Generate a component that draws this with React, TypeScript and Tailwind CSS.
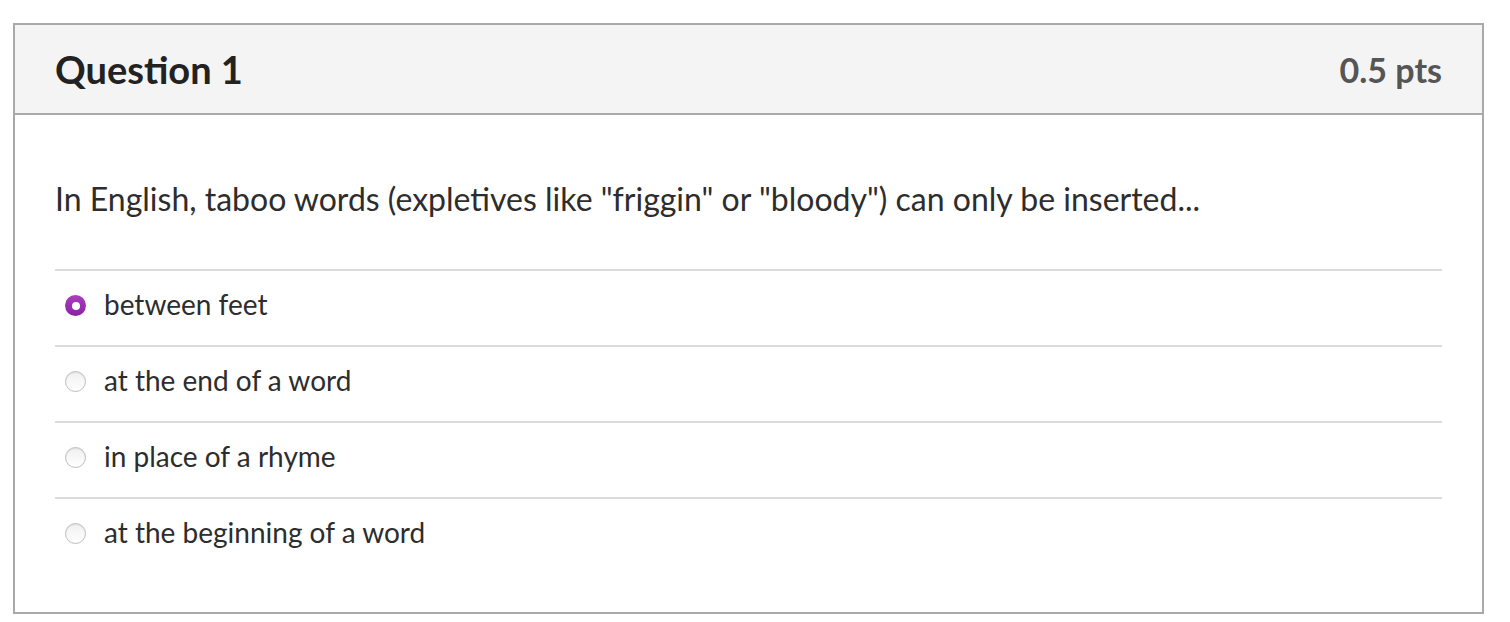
const options = [
  { id: "a", label: "between feet", checked: true },
  { id: "b", label: "at the end of a word", checked: false },
  { id: "c", label: "in place of a rhyme", checked: false },
  { id: "d", label: "at the beginning of a word", checked: false },
];

function Radio({ checked }: { checked: boolean }) {
  if (checked) {
    return (
      <span className="flex h-[21px] w-[21px] shrink-0 items-center justify-center rounded-full bg-gradient-to-b from-[#a93fbd] to-[#8c20a6]">
        <span className="h-[8px] w-[8px] rounded-full bg-white" />
      </span>
    );
  }
  return (
    <span className="h-[21px] w-[21px] shrink-0 rounded-full border border-[#bdbdbd] bg-gradient-to-b from-[#f0f0f0] to-white shadow-[inset_0_1px_1px_rgba(0,0,0,0.08)]" />
  );
}

export default function App() {
  return (
    <div className="min-h-[622px] bg-white pl-[13px] pt-[23px] font-['Lato','Liberation_Sans',sans-serif]">
      <div className="flex h-[591px] w-[1471px] flex-col border-2 border-[#a9a9a9]">
        <div className="flex h-[90px] items-center justify-between border-b-2 border-[#a9a9a9] bg-[#f4f4f4] px-[40px]">
          <h2 className="mt-[-1px] text-[38px] font-bold leading-[46px] text-[#222]">Question 1</h2>
          <span className="mt-[1px] text-[34px] font-bold leading-[42px] text-[#555]">0.5 pts</span>
        </div>
        <div className="flex flex-col px-[40px]">
          <p className="mt-[64px] mb-[50px] text-[32px] leading-[40px] text-[#2d2d2d]">
            In English, taboo words (expletives like "friggin" or "bloody") can only be inserted...
          </p>
          <ul>
            {options.map((o) => (
              <li
                key={o.id}
                className="flex h-[76px] items-center gap-[18px] border-t-2 border-[#dcdcdc] pb-[5px] pl-[10px]"
              >
                <Radio checked={o.checked} />
                <span className="mb-[3px] text-[28px] leading-[36px] text-[#2d2d2d]">{o.label}</span>
              </li>
            ))}
          </ul>
        </div>
      </div>
    </div>
  );
}
